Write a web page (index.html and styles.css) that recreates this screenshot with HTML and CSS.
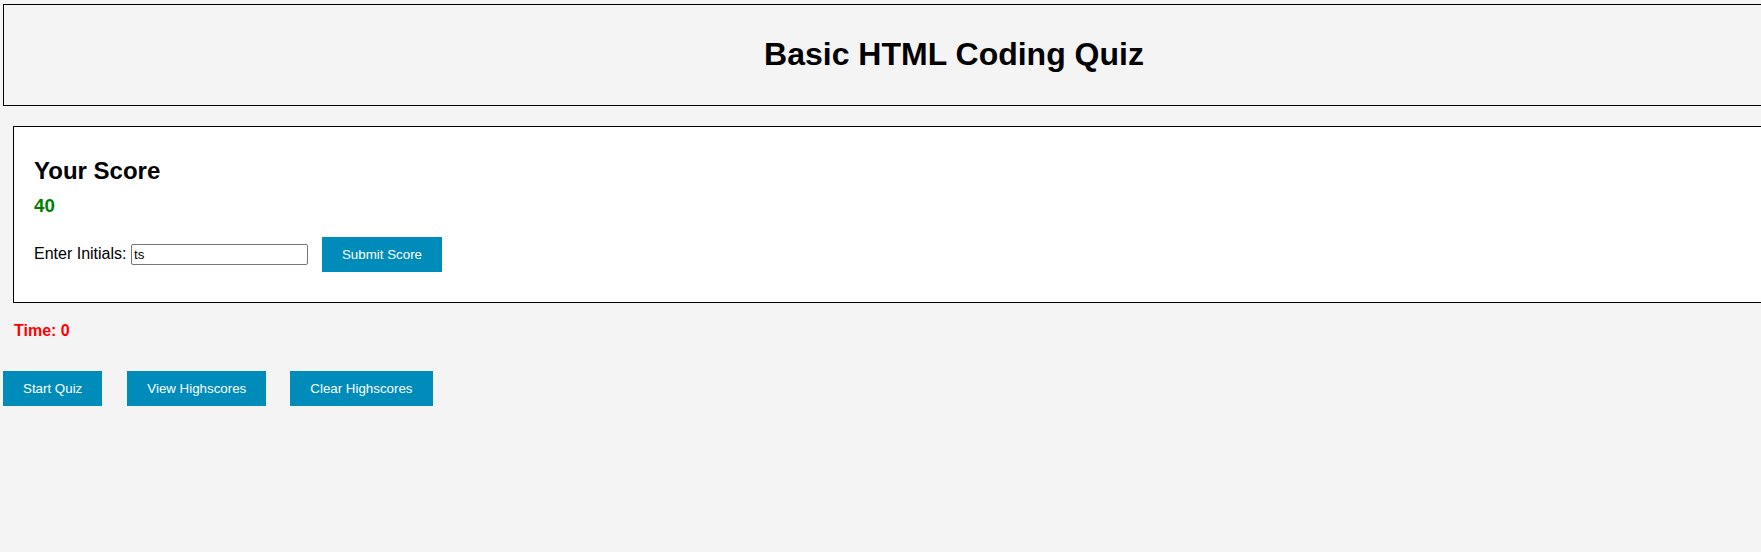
FILE: index.html
```html
<!DOCTYPE html>
<html lang="en">
<head>
<meta charset="utf-8">
<title>Basic HTML Coding Quiz</title>
<link rel="stylesheet" href="styles.css">
</head>
<body>
  <header class="site-header">
    <h1 class="site-title">Basic HTML Coding Quiz</h1>
  </header>

  <section class="score-card">
    <h2 class="score-heading">Your Score</h2>
    <h3 class="score-value">40</h3>
    <div class="initials-row">
      <label class="initials-label" for="initials">Enter Initials:</label>
      <input class="initials-input" id="initials" type="text" value="ts">
      <button class="btn btn-submit" type="button">Submit Score</button>
    </div>
  </section>

  <p class="timer">Time: 0</p>

  <nav class="controls">
    <button class="btn" type="button">Start Quiz</button>
    <button class="btn" type="button">View Highscores</button>
    <button class="btn" type="button">Clear Highscores</button>
  </nav>
</body>
</html>
```

FILE: styles.css
```css
html {
  overflow: hidden;
}

body {
  margin: 0;
  background: #f4f4f4;
  font-family: "Liberation Sans", Arial, sans-serif;
  color: #000;
}

.site-header {
  box-sizing: border-box;
  width: 1902px;
  margin: 4px 0 0 3px;
  padding: 10px;
  border: 1px solid #000;
  text-align: center;
}

.site-title {
  margin: 21.44px 0;
  font-size: 32px;
  font-weight: bold;
}

.score-card {
  box-sizing: border-box;
  width: 1900px;
  margin: 20px 0 0 13px;
  padding: 10px 20px;
  background: #fff;
  border: 1px solid #000;
}

.score-heading {
  margin: 20px 0 10px;
  font-size: 24px;
  font-weight: bold;
}

.score-value {
  margin: 0 0 20px;
  font-size: 18.72px;
  font-weight: bold;
  color: #008000;
}

.initials-row {
  display: flex;
  align-items: center;
  margin-bottom: 20px;
}

.initials-label {
  font-size: 16px;
  margin-right: 4.5px;
}

.initials-input {
  box-sizing: border-box;
  width: 177px;
  height: 21px;
  padding: 1px 2px;
  border: 1px solid #767676;
  border-radius: 2px;
  background: #fff;
  font-family: "Liberation Sans", Arial, sans-serif;
  font-size: 13.33px;
  color: #000;
}

.btn {
  padding: 10px 20px;
  border: none;
  background: #008cba;
  color: #fff;
  font-family: "Liberation Sans", Arial, sans-serif;
  font-size: 13.33px;
  line-height: normal;
  cursor: pointer;
}

.btn-submit {
  margin-left: 14px;
}

.timer {
  margin: 19px 0 0 14px;
  font-size: 16px;
  font-weight: bold;
  color: #ff0000;
}

.controls {
  display: flex;
  gap: 24px;
  margin: 31px 0 0 3px;
}

.controls .btn:first-child {
  margin-right: 1px;
}
```
